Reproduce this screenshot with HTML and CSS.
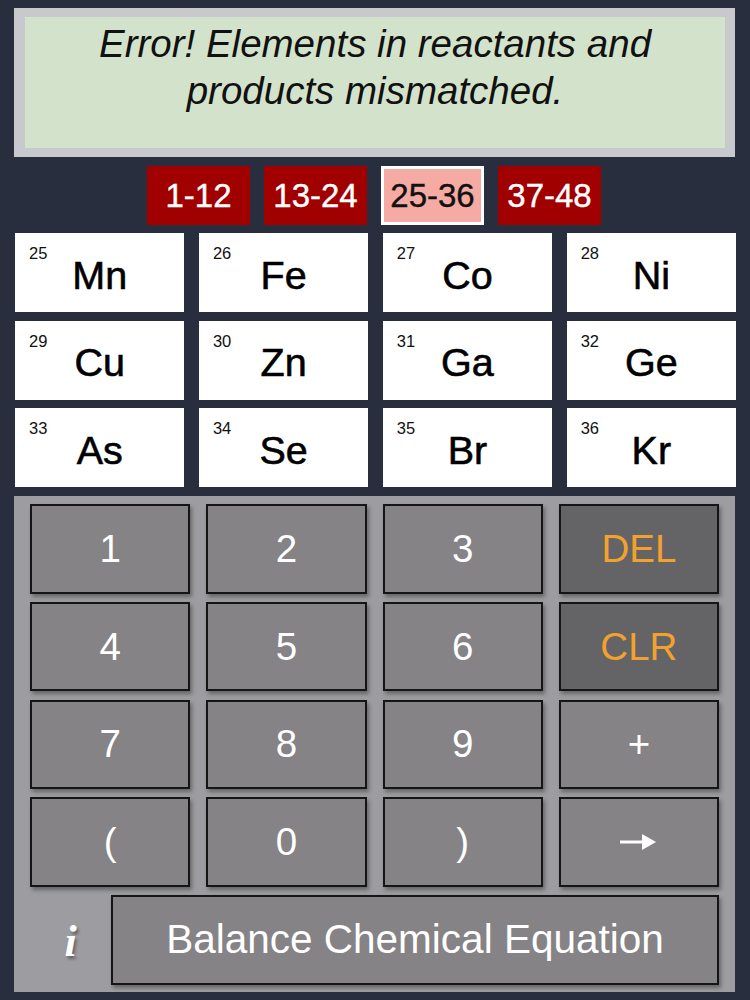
FILE: index.html
```html
<!DOCTYPE html>
<html>
<head>
<meta charset="utf-8">
<link rel="stylesheet" href="styles.css">
</head>
<body>
<div class="app">
  <div class="display">
    <div class="screen">
      <p class="msg">Error! Elements in reactants and<br>products mismatched.</p>
    </div>
  </div>

  <div class="tabs">
    <div class="tab">1-12</div>
    <div class="tab">13-24</div>
    <div class="tab active">25-36</div>
    <div class="tab">37-48</div>
  </div>

  <div class="elements">
    <div class="el"><span class="num">25</span><span class="sym">Mn</span></div>
    <div class="el"><span class="num">26</span><span class="sym">Fe</span></div>
    <div class="el"><span class="num">27</span><span class="sym">Co</span></div>
    <div class="el"><span class="num">28</span><span class="sym">Ni</span></div>
    <div class="el"><span class="num">29</span><span class="sym">Cu</span></div>
    <div class="el"><span class="num">30</span><span class="sym">Zn</span></div>
    <div class="el"><span class="num">31</span><span class="sym">Ga</span></div>
    <div class="el"><span class="num">32</span><span class="sym">Ge</span></div>
    <div class="el"><span class="num">33</span><span class="sym">As</span></div>
    <div class="el"><span class="num">34</span><span class="sym">Se</span></div>
    <div class="el"><span class="num">35</span><span class="sym">Br</span></div>
    <div class="el"><span class="num">36</span><span class="sym">Kr</span></div>
  </div>

  <div class="keypad">
    <div class="keys">
      <div class="key">1</div>
      <div class="key">2</div>
      <div class="key">3</div>
      <div class="key fn">DEL</div>
      <div class="key">4</div>
      <div class="key">5</div>
      <div class="key">6</div>
      <div class="key fn">CLR</div>
      <div class="key">7</div>
      <div class="key">8</div>
      <div class="key">9</div>
      <div class="key">+</div>
      <div class="key">(</div>
      <div class="key">0</div>
      <div class="key">)</div>
      <div class="key"><svg class="arrow" width="38" height="18" viewBox="0 0 38 18"><line x1="0" y1="9" x2="24" y2="9" stroke="#fff" stroke-width="3"/><polygon points="22,1 36,9 22,17" fill="#fff"/></svg></div>
    </div>
    <div class="bottom">
      <div class="info">i</div>
      <div class="key balance">Balance Chemical Equation</div>
    </div>
  </div>
</div>
</body>
</html>
```

FILE: styles.css
```css
html, body {
  margin: 0;
  padding: 0;
}
body {
  background: #282e3e;
  width: 750px;
  height: 1000px;
  overflow: hidden;
  font-family: "Liberation Sans", Arial, sans-serif;
}
.app {
  padding: 8px 15px 0 14px;
  display: flex;
  flex-direction: column;
}
.display {
  background: #c8c9cd;
  padding: 9px 10px 9px 11px;
  height: 131px;
}
.screen {
  background: #d3e3cb;
  height: 131px;
  box-sizing: border-box;
  padding-top: 3px;
}
.msg {
  margin: 0;
  text-align: center;
  font-style: italic;
  font-size: 38.5px;
  line-height: 47px;
  color: #111;
}
.tabs {
  display: flex;
  justify-content: center;
  gap: 14px;
  margin-top: 9px;
  padding-right: 1px;
}
.tab {
  width: 103px;
  height: 59px;
  box-sizing: border-box;
  background: #a00000;
  color: #fff;
  font-size: 33px;
  -webkit-text-stroke: 0.4px currentColor;
  display: flex;
  align-items: center;
  justify-content: center;
}
.tab.active {
  background: #f5aba3;
  color: #111;
  border: 3px solid #fff;
}
.elements {
  display: grid;
  grid-template-columns: repeat(4, 1fr);
  grid-auto-rows: 79px;
  column-gap: 14.5px;
  row-gap: 8.5px;
  margin-top: 8px;
  width: 721px;
  margin-left: 1px;
}
.el {
  background: #fff;
  position: relative;
  display: flex;
  justify-content: center;
  align-items: center;
}
.num {
  position: absolute;
  left: 14px;
  top: 11px;
  font-size: 16.5px;
  color: #111;
}
.sym {
  font-size: 39.5px;
  color: #000;
  margin-top: 5px;
  -webkit-text-stroke: 0.6px #000;
}
.keypad {
  margin-top: 9px;
  background: #9d9ca0;
  width: 721px;
  box-sizing: border-box;
  padding: 8px 16px 7px 16px;
}
.keys {
  display: grid;
  grid-template-columns: repeat(4, 1fr);
  grid-auto-rows: 89.5px;
  column-gap: 16px;
  row-gap: 8.25px;
}
.key {
  background: #858386;
  border: 2px solid #151515;
  box-sizing: border-box;
  box-shadow: 2px 3px 4px rgba(0, 0, 0, 0.35);
  color: #fff;
  font-size: 38.5px;
  display: flex;
  align-items: center;
  justify-content: center;
}
.key.fn {
  background: #646366;
  color: #f2a12e;
}
.arrow {
  display: block;
}
.bottom {
  display: flex;
  margin-top: 8.25px;
  height: 89.5px;
}
.info {
  width: 81px;
  display: flex;
  align-items: center;
  justify-content: center;
  font-family: "Liberation Serif", "Times New Roman", serif;
  font-style: italic;
  font-weight: bold;
  font-size: 44px;
  color: #fff;
  text-shadow: 2px 3px 3px rgba(0, 0, 0, 0.35);
  padding-top: 4px;
  box-sizing: border-box;
}
.key.balance {
  flex: 1;
  font-size: 40.5px;
}
```
